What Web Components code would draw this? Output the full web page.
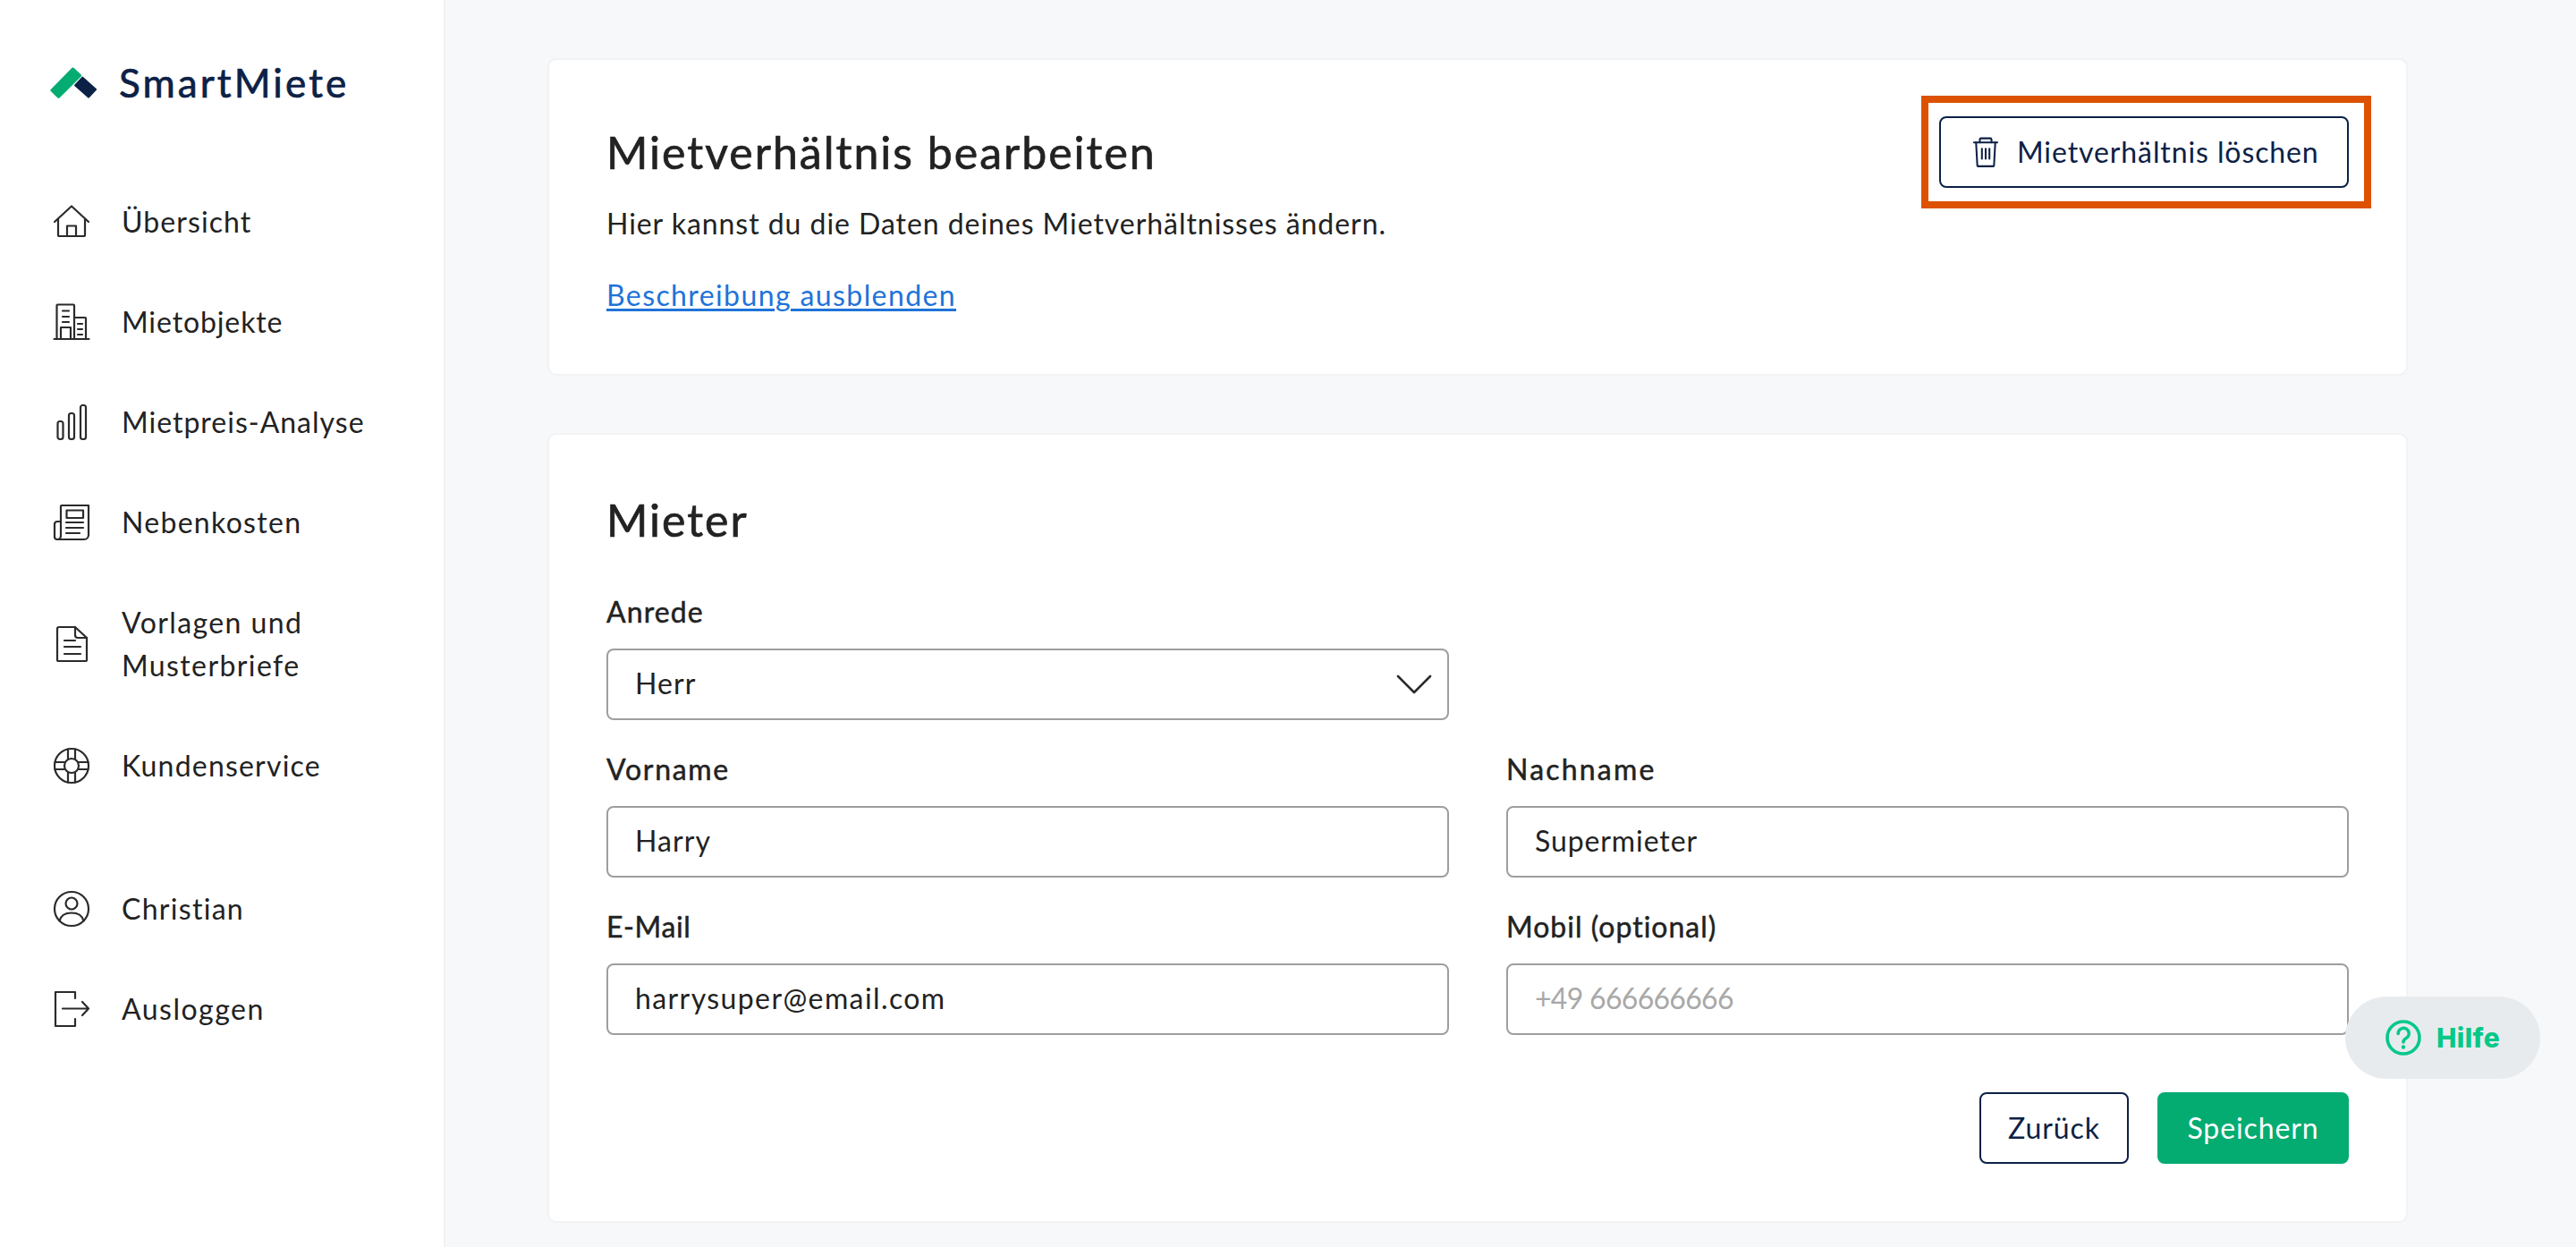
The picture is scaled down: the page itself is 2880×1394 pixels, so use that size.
<!DOCTYPE html>
<html lang="de"><head><meta charset="utf-8"><title>SmartMiete</title>
<style>
html,body{margin:0;height:100%;overflow:hidden}
body{font-family:Lato,"Liberation Sans",sans-serif;font-size:32px;letter-spacing:.9px;color:#222;background:#f7f8fa}
</style></head><body>
<sm-app>
  <sm-sidebar slot="side">
    <sm-logo></sm-logo>
    <sm-nav-item icon="home" style="letter-spacing:1.1px">Übersicht</sm-nav-item>
    <sm-nav-item icon="building">Mietobjekte</sm-nav-item>
    <sm-nav-item icon="bars" style="letter-spacing:1px">Mietpreis-Analyse</sm-nav-item>
    <sm-nav-item icon="news" style="letter-spacing:1.3px">Nebenkosten</sm-nav-item>
    <sm-nav-item icon="doc" style="letter-spacing:1.4px">Vorlagen und<br>Musterbriefe</sm-nav-item>
    <sm-nav-item icon="buoy" style="letter-spacing:1.2px">Kundenservice</sm-nav-item>
    <sm-nav-item icon="user" class="sep" style="letter-spacing:1.3px">Christian</sm-nav-item>
    <sm-nav-item icon="logout" style="letter-spacing:1.5px">Ausloggen</sm-nav-item>
  </sm-sidebar>
  <sm-card id="c1">
    <sm-header>
      <sm-title>Mietverhältnis bearbeiten</sm-title>
      <sm-highlight slot="action"><sm-button icon="trash" wide>Mietverhältnis löschen</sm-button></sm-highlight>
    </sm-header>
    <sm-text>Hier kannst du die Daten deines Mietverhältnisses ändern.</sm-text>
    <sm-link>Beschreibung ausblenden</sm-link>
  </sm-card>
  <sm-card id="c2">
    <sm-title class="form">Mieter</sm-title>
    <sm-form-grid>
      <sm-field label="Anrede" value="Herr" select style="--lls:1.1px"></sm-field><span></span>
      <sm-field label="Vorname" value="Harry" style="--lls:1.7px"></sm-field>
      <sm-field label="Nachname" value="Supermieter" style="--lls:2.2px;--ls:.9px"></sm-field>
      <sm-field label="E-Mail" value="harrysuper@email.com" style="--lls:.6px;--ls:1.4px"></sm-field>
      <sm-field label="Mobil (optional)" placeholder="+49 666666666" style="--lls:1px"></sm-field>
    </sm-form-grid>
    <sm-actions>
      <sm-button style="width:167px">Zurück</sm-button>
      <sm-button primary style="width:214px">Speichern</sm-button>
    </sm-actions>
  </sm-card>
</sm-app>
<sm-help>Hilfe</sm-help>
<script>
const S='fill="none" stroke="currentColor" stroke-width="2.2" stroke-linecap="round" stroke-linejoin="round"';
const ICONS={
home:`<path d="M1 20 20 2.500 39 20"/><path d="M5 17v17.500a1.500 1.500 0 0 0 1.500 1.500h27a1.500 1.500 0 0 0 1.500-1.500V17"/><path d="M15 36V24.500h10V36"/>`,
building:`<path d="M0.500 39h39"/><path d="M3.500 39V1.500a1 1 0 0 1 1-1h17.500a1 1 0 0 1 1 1V39"/><path d="M23 15h12a1 1 0 0 1 1 1v23"/><path d="M8 39V26h11v13"/><path d="M10 7.500h7M10 14h7M10 20h7M27 22h5M27 28h5M27 34h5"/>`,
bars:`<rect x="4.500" y="19" width="6" height="20" rx="2.500"/><rect x="17" y="10" width="6" height="29" rx="2.500"/><rect x="30" y="1" width="6" height="38" rx="2.500"/>`,
news:`<path d="M8 35V2a1 1 0 0 1 1-1h30v33a5 5 0 0 1-5 5H4"/><path d="M8 19H4a3 3 0 0 0-3 3v14a3 3 0 0 0 3 3 4 4 0 0 0 4-4"/><rect x="14.500" y="6.500" width="18.500" height="8.500"/><path d="M14 20h19M14 26h19M14 32h15"/>`,
doc:`<path d="M24 1H6a2 2 0 0 0-2 2v35a1 1 0 0 0 1 1h31a1 1 0 0 0 1-1V13z"/><path d="M24 1v9a3 3 0 0 0 3 3h10"/><path d="M12 16h12M12 23h18M12 31h18"/>`,
buoy:`<circle cx="20" cy="20" r="19"/><circle cx="20" cy="20" r="8"/><path d="M16 1.500v11M24 1.500v11M16 27.500v11M24 27.500v11M1.500 16h11M1.500 24h11M27.500 16h11M27.500 24h11"/>`,
user:`<circle cx="20" cy="20" r="19"/><circle cx="20" cy="14" r="6.500"/><path d="M6.500 33.500C8 27 14 24.500 20 24.500s12 2.500 13.500 9"/>`,
logout:`<path d="M24 8V1H2v38h22v-8"/><path d="M10 19.500h29M32 12l7 7.500-7 7.500"/>`
};
const def=(name,css,html)=>{customElements.define(name,class extends HTMLElement{
  constructor(){super();this.attachShadow({mode:'open'});this.shadowRoot.innerHTML=`<style>${css}</style>${typeof html==='function'?html(this):html}`}
})};
def('sm-app',`:host{display:grid;grid-template-columns:498px 1fr;height:1394px;overflow:hidden}
main{padding:65px 188px 0 114px;display:flex;flex-direction:column;gap:64px;min-width:0}`,`<slot name="side"></slot><main><slot></slot></main>`);
def('sm-sidebar',`:host{display:flex;flex-direction:column;gap:64px;box-sizing:border-box;background:#fff;border-right:2px solid #f0f1f3;padding:0 0 0 60px;height:1394px}`,`<slot></slot>`);
def('sm-logo',`:host{display:flex;align-items:center;height:48px;margin:68px 0 44px -4px;gap:25px;color:#0c2146;font-size:44px;letter-spacing:3.1px;-webkit-text-stroke:.7px currentColor}
svg{width:52px;height:35px;flex:none}`,`<svg viewBox="0 0 52 35"><path d="M0.800 25 24.500.800a2 2 0 0 1 2 0l8.200 7.600a1.500 1.500 0 0 1 0 2L10.500 34.400a1.500 1.500 0 0 1-2 0L.800 27a1.500 1.500 0 0 1 0-2z" fill="#05ac72"/><path d="M27.500 19.500 35.500 11a1 1 0 0 1 1.500 0L51.500 24a1.300 1.300 0 0 1 0 2l-7.500 8a1.300 1.300 0 0 1-2 0L27.500 21.300a1.300 1.300 0 0 1 0-1.800z" fill="#0c2146"/></svg><span>SmartMiete</span>`);
def('sm-nav-item',`:host{display:flex;align-items:center;gap:36px;line-height:48px;color:#222;font-size:32px}
:host(.sep){margin-top:48px}
svg{width:40px;height:40px;flex:none;overflow:visible;color:#2b2b2b}`,el=>`<svg viewBox="0 0 40 40" ${S}>${ICONS[el.getAttribute('icon')]}</svg><span><slot></slot></span>`);
def('sm-card',`:host{display:block;box-sizing:border-box;background:#fff;border:2px solid #f1f2f3;border-radius:10px;padding:63px 64px 64px}`,`<slot></slot>`);
def('sm-header',`:host{display:flex;justify-content:space-between;align-items:center;height:80px}`,`<div><slot></slot></div><slot name="action"></slot>`);
def('sm-title',`:host{display:block;font-size:50px;letter-spacing:2px;-webkit-text-stroke:.7px currentColor;line-height:64px;color:#222}
:host(.form){margin-bottom:48px}`,`<slot></slot>`);
def('sm-text',`:host{display:block;line-height:48px;margin-top:16px;letter-spacing:.95px}`,`<slot></slot>`);
def('sm-link',`:host{display:block;line-height:48px;margin-top:32px;color:#1f73d8;letter-spacing:1.4px;text-decoration:underline;text-decoration-thickness:2.5px;text-underline-offset:3px}`,`<slot></slot>`);
def('sm-highlight',`:host{display:block;border:8px solid #dc5200;padding:15px 17px 15px 12px;margin-right:-25px}`,`<slot></slot>`);
def('sm-form-grid',`:host{display:grid;grid-template-columns:942px 942px;column-gap:64px;row-gap:32px}`,`<slot></slot>`);
def('sm-field',`:host{display:block}
label{display:block;-webkit-text-stroke:.5px currentColor;letter-spacing:var(--lls,.9px);line-height:48px;height:48px;margin-bottom:16px;position:relative;top:-1px}
.b{box-sizing:border-box;height:80px;border:2px solid #9e9e9e;border-radius:8px;padding:0 30px;display:flex;align-items:center;justify-content:space-between;font-size:32px;letter-spacing:var(--ls,1.1px);color:#222}
.b span{margin-bottom:3px}
.p{color:#a8a8a8;letter-spacing:-.7px}
svg{width:38px;height:20px;margin-right:-12px;overflow:visible}`,el=>{
 const v=el.getAttribute('value'),p=el.getAttribute('placeholder');
 return `<label>${el.getAttribute('label')}</label><div class="b"><span class="${v?'':'p'}">${v||p}</span>${el.hasAttribute('select')?'<svg viewBox="0 0 38 20" fill="none" stroke="#2b2b2b" stroke-width="2.600" stroke-linecap="round" stroke-linejoin="round"><path d="M1 1 19 19 37 1"/></svg>':''}</div>`});
def('sm-actions',`:host{display:flex;justify-content:flex-end;gap:32px;margin-top:64px}`,`<slot></slot>`);
def('sm-button',`:host{display:inline-flex;box-sizing:border-box;align-items:center;justify-content:center;gap:21px;height:80px;padding:0 10px;border:2px solid #0c2146;border-radius:8px;background:#fff;color:#0c2146;font-size:32px}
:host([primary]){background:#05ac72;border-color:#05ac72;color:#fff}
:host([wide]){width:458px;padding-left:36px;justify-content:flex-start}
span{margin-bottom:2px}
svg{width:28px;height:35px;flex:none;overflow:visible}`,el=>`${el.getAttribute('icon')?'<svg viewBox="0 0 30 35" fill="none" stroke="currentColor" stroke-width="2.200" stroke-linecap="round" stroke-linejoin="round"><path d="M1 5.500h28"/><path d="M8 5.500V2a1.500 1.500 0 0 1 1.500-1.500h11A1.500 1.500 0 0 1 22 2v3.500"/><path d="M3.500 5.500 5 33a1 1 0 0 0 1 1h18a1 1 0 0 0 1-1l1.500-27.500"/><path d="M10.500 13v12M15 13v12M19.500 13v12"/></svg>':''}<span><slot></slot></span>`);
def('sm-help',`:host{position:fixed;left:2622px;top:1114px;width:218px;height:92px;border-radius:46px;background:#e8ebee;display:flex;align-items:center;justify-content:center;gap:17px;color:#05c888;font:800 30px Inter,Roboto,sans-serif;letter-spacing:.4px}
svg{width:40px;height:40px;flex:none}`,`<svg viewBox="0 0 40 40" fill="none" stroke="currentColor" stroke-width="3.600"><circle cx="20" cy="20" r="18"/><path d="M14.200 15.500a6 6 0 1 1 9 5c-2.200 1.300-3.200 2.300-3.200 4.500" stroke-linecap="round"/><circle cx="20" cy="30.500" r="2.200" fill="currentColor" stroke="none"/></svg><span><slot></slot></span>`);
</script>
</body></html>
